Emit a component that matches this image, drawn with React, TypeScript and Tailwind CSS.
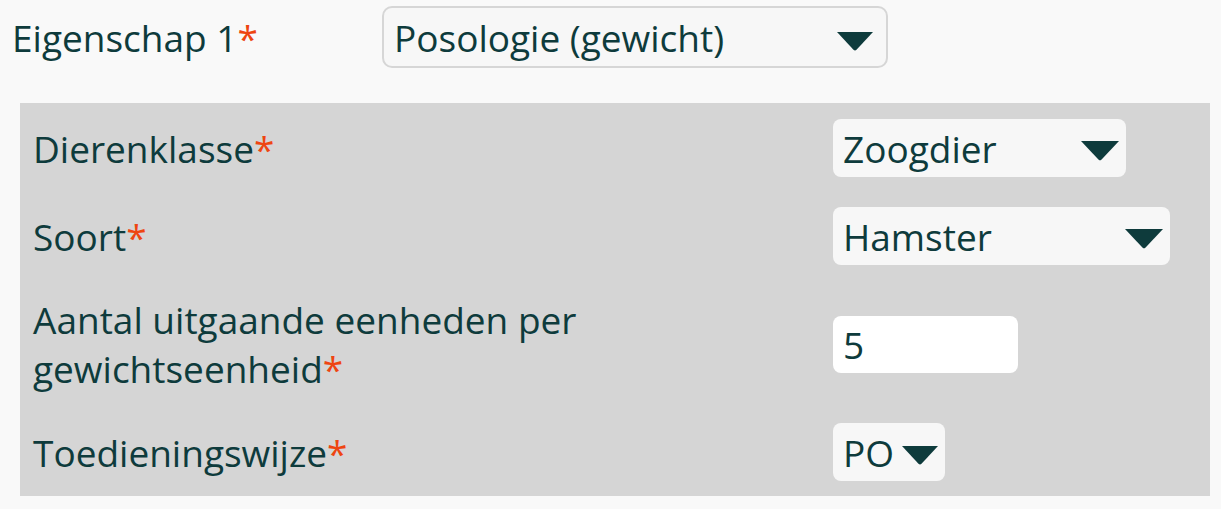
import React from "react";

const TEXT = "text-[#0e3b3c]";

function Caret({ w = 38, h = 20 }: { w?: number; h?: number }) {
  return (
    <svg width={w} height={h} viewBox="0 0 38 20" className="shrink-0">
      <path d="M0 0 H38 L20.6 18.6 Q19 20.2 17.4 18.6 Z" fill="#0e3b3c" />
    </svg>
  );
}

function Req({ children }: { children: React.ReactNode }) {
  return (
    <>
      {children}
      <span className="text-[#ee4511]">*</span>
    </>
  );
}

function FakeSelect({ value, width }: { value: string; width: string }) {
  return (
    <div
      className={`flex h-[58px] items-center justify-between rounded-lg bg-[#f7f7f7] pl-[10px] pr-[7px] ${width}`}
    >
      <span>{value}</span>
      <span className="translate-y-[3px]">
        <Caret />
      </span>
    </div>
  );
}

function Row({ label, children }: { label: React.ReactNode; children: React.ReactNode }) {
  return (
    <div className="flex items-center">
      <div className="w-[800px] pr-[190px]">{label}</div>
      <div>{children}</div>
    </div>
  );
}

export default function App() {
  return (
    <div
      className={`min-h-[509px] w-[1221px] bg-[#f9f9f9] pt-[6px] ${TEXT} text-[37px] leading-[49px]`}
      style={{ fontFamily: '"Open Sans", "Noto Sans", sans-serif' }}
    >
      {/* Eigenschap select */}
      <div className="flex items-center pl-[12px]">
        <div className="w-[370px]">
          <Req>Eigenschap 1</Req>
        </div>
        <div className="flex h-[62px] w-[506px] items-center justify-between rounded-[10px] border-2 border-[#d6d6d6] bg-[#f7f7f7] pl-[10px] pr-[13px]">
          <span>Posologie (gewicht)</span>
          <span className="translate-y-[4px]">
            <Caret w={36} h={19} />
          </span>
        </div>
      </div>

      {/* Sub panel */}
      <div className="ml-[20px] mt-[35px] flex w-[1190px] flex-col gap-[30px] bg-[#d5d5d5] pb-[15px] pl-[13px] pt-[16px]">
        <Row label={<Req>Dierenklasse</Req>}>
          <FakeSelect value="Zoogdier" width="w-[293px]" />
        </Row>
        <Row label={<Req>Soort</Req>}>
          <FakeSelect value="Hamster" width="w-[337px]" />
        </Row>
        <Row label={<Req>Aantal uitgaande eenheden per gewichtseenheid</Req>}>
          <div className="flex h-[57px] w-[185px] items-center rounded-lg bg-white pl-[10px]">5</div>
        </Row>
        <Row label={<Req>Toedieningswijze</Req>}>
          <div className="flex h-[58px] w-[112px] items-center rounded-lg bg-[#f7f7f7] pl-[10px] pr-[7px]">
            <span>PO</span>
            <span className="ml-auto translate-y-[3px]">
              <Caret w={36} h={19} />
            </span>
          </div>
        </Row>
      </div>
    </div>
  );
}
